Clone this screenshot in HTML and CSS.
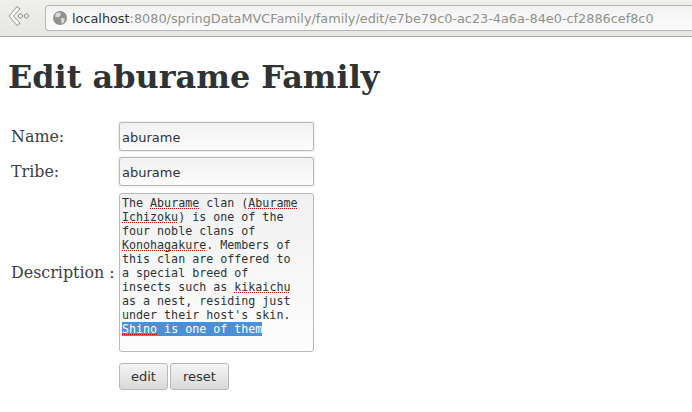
FILE: index.html
```html
<!DOCTYPE html>
<html lang="en">
<head>
    <meta charset="UTF-8">
    <title>Edit aburame Family</title>
    <link rel="stylesheet" href="styles.css">
</head>
<body>
    <div class="toolbar">
        <svg class="back" width="32" height="28" viewBox="0 0 32 28">
            <path d="M13 2.5 L5 12 L13 21.5 L16 19 L9.5 12 L16 5 Z" fill="#f8f8f6" stroke="#a5a8a2" stroke-width="1.1" stroke-linejoin="round"/>
            <circle cx="16.5" cy="12" r="2.1" fill="none" stroke="#8f928c" stroke-width="1"/>
            <circle cx="22.5" cy="12" r="2.1" fill="none" stroke="#8f928c" stroke-width="1"/>
        </svg>
        <div class="urlbar">
            <svg class="globe" width="16" height="16" viewBox="0 0 16 16">
                <circle cx="8" cy="8" r="7" fill="#8f928d"/>
                <path d="M4 3 L8 2.5 L9 5 L6.5 7.5 L3 6.5 Z M9 8 L13 8.5 L11.5 13 L9.5 13.5 Z" fill="#dcdcda"/>
            </svg>
            <span class="host">localhost</span><span class="path">:8080/springDataMVCFamily/family/edit/e7be79c0-ac23-4a6a-84e0-cf2886cef8c0</span>
        </div>
    </div>

    <div class="page">
        <h1>Edit aburame Family</h1>
        <form>
            <table class="edit-form">
                <tr>
                    <td class="label">Name:</td>
                    <td><div class="input-wrap"><input type="text" value="aburame"></div></td>
                </tr>
                <tr>
                    <td class="label">Tribe:</td>
                    <td><div class="input-wrap"><input type="text" value="aburame"></div></td>
                </tr>
                <tr>
                    <td class="label">Description :</td>
                    <td>
                        <div class="textarea">The <span class="typo">Aburame</span> clan (<span class="typo">Aburame</span>
<span class="typo">Ichizoku</span>) is one of the
four noble clans of
<span class="typo">Konohagakure</span>. Members of
this clan are offered to
a special breed of
insects such as <span class="typo">kikaichu</span>
as a nest, residing just
under their host's skin.
<span class="selected"><span class="typo">Shino</span> is one of them</span></div>
                    </td>
                </tr>
                <tr>
                    <td></td>
                    <td class="buttons">
                        <button type="button">edit</button>
                        <button type="reset" class="reset-btn">reset</button>
                    </td>
                </tr>
            </table>
        </form>
    </div>
</body>
</html>
```

FILE: styles.css
```css
body {
    margin: 0;
    background: #ffffff;
    color: #2e3436;
    font-family: 'DejaVu Serif', serif;
    overflow: hidden;
}
.toolbar {
    display: flex;
    align-items: center;
    height: 36px;
    padding-left: 4px;
    background: linear-gradient(#efefed, #e6e6e3);
    border-bottom: 1px solid #a8aaa6;
}
.back {
    margin-right: 9px;
    flex: none;
}
.urlbar {
    display: flex;
    align-items: center;
    flex: 1;
    height: 24px;
    padding-left: 6px;
    background: linear-gradient(#f2f2f2, #fbfbfb);
    border: 1px solid #b5b7b2;
    border-right: none;
    border-radius: 4px 0 0 4px;
    font-family: 'DejaVu Sans', sans-serif;
    font-size: 12.83px;
    white-space: nowrap;
    overflow: hidden;
}
.globe {
    margin-right: 4px;
    flex: none;
}
.host {
    color: #2e3436;
}
.path {
    color: #8e918c;
}
.page {
    padding: 0 8px;
}
h1 {
    margin: 21px 0 23px;
    font-size: 31.9px;
    line-height: 38px;
    font-weight: bold;
}
.edit-form {
    border-collapse: separate;
    border-spacing: 0;
}
.edit-form td {
    padding: 2px 3px;
}
.edit-form .label {
    width: 104px;
    padding-right: 0;
    font-size: 15.9px;
    color: #3a4042;
    white-space: nowrap;
}
.input-wrap {
    padding: 1px;
    background: #f0f0ef;
    width: 197px;
    box-sizing: border-box;
}
input {
    display: block;
    box-sizing: border-box;
    width: 195px;
    height: 29px;
    margin: 0;
    padding: 2px 2px 0;
    border: 1px solid #b8bab5;
    border-radius: 3px;
    background: linear-gradient(#f1f1f1, #fcfcfc);
    color: #2e3436;
    font-family: 'DejaVu Sans', sans-serif;
    font-size: 13px;
}
.textarea {
    box-sizing: border-box;
    width: 195px;
    height: 159px;
    margin: 2px 0 2px 1px;
    padding: 2px;
    border: 1px solid #b8bab5;
    border-radius: 3px;
    background: linear-gradient(#f1f1f1, #fdfdfd);
    color: #2e3436;
    font-family: 'DejaVu Sans Mono', monospace;
    font-size: 11.67px;
    line-height: 14px;
    white-space: pre;
}
.typo {
    background: linear-gradient(90deg, #cc0000 50%, transparent 50%) 0 calc(100% - 1px) / 2px 1px repeat-x;
}
.selected {
    background: #4a90d9;
    color: #ffffff;
}
.edit-form .buttons {
    display: flex;
    gap: 2px;
    padding: 7px 3px 2px 4px;
}
button {
    height: 27px;
    padding: 0 11px;
    border: 1px solid #b8bab5;
    border-radius: 3px;
    background: linear-gradient(#f4f4f4, #d9d9d9);
    color: #2e3436;
    font-family: 'DejaVu Sans', sans-serif;
    font-size: 13px;
}
.reset-btn {
    min-width: 59px;
}
```
